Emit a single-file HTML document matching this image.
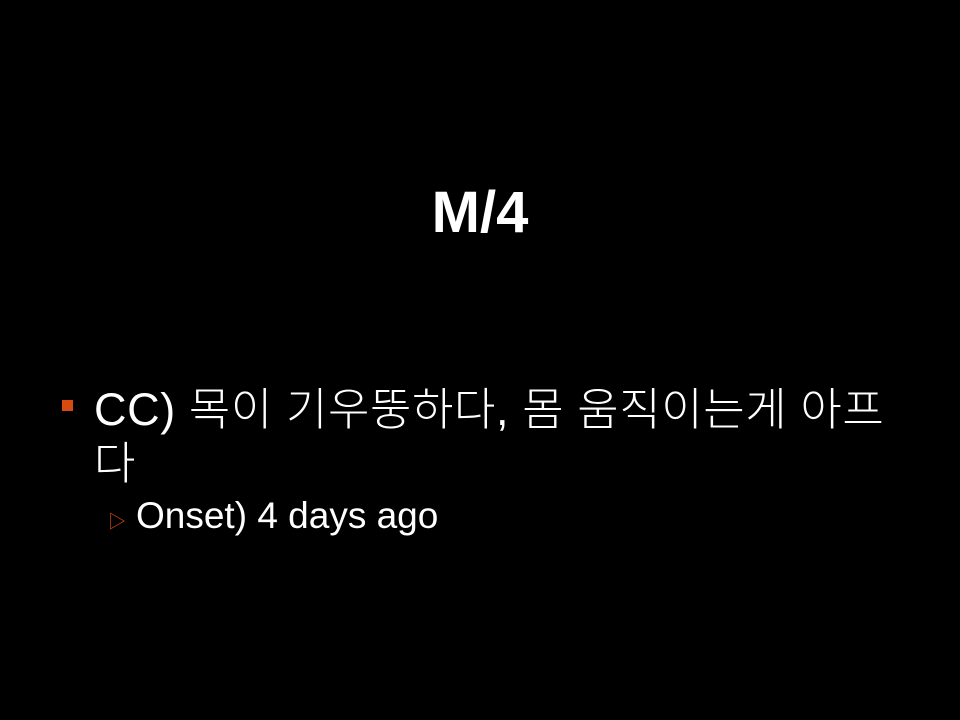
<!DOCTYPE html>
<html><head><meta charset="utf-8"><style>
body{margin:0;width:960px;height:720px;background:#000;position:relative;overflow:hidden;font-family:"Liberation Sans","Noto Sans CJK KR","NanumGothic",sans-serif;color:#fff}
.t{position:absolute;left:0;width:960px;top:178px;text-align:center;font-weight:bold;font-size:58px;line-height:70px}
.b{position:absolute;left:62px;top:400px;width:11px;height:11px;background:#d84a10}
.l1{position:absolute;left:94px;top:383px;font-size:45px;line-height:54px;width:860px;font-weight:300;letter-spacing:0.6px}
.tri{position:absolute;left:108px;top:508px;font-size:18px;color:#d84a10}
.l2{position:absolute;left:136px;top:494px;font-size:37px;line-height:44px}
</style></head><body>
<div class="t">M/4</div>
<div class="b"></div>
<div class="l1">CC) 목이 기우뚱하다, 몸 움직이는게 아프<br>다</div>
<div class="tri">▷</div>
<div class="l2">Onset) 4 days ago</div>
</body></html>
